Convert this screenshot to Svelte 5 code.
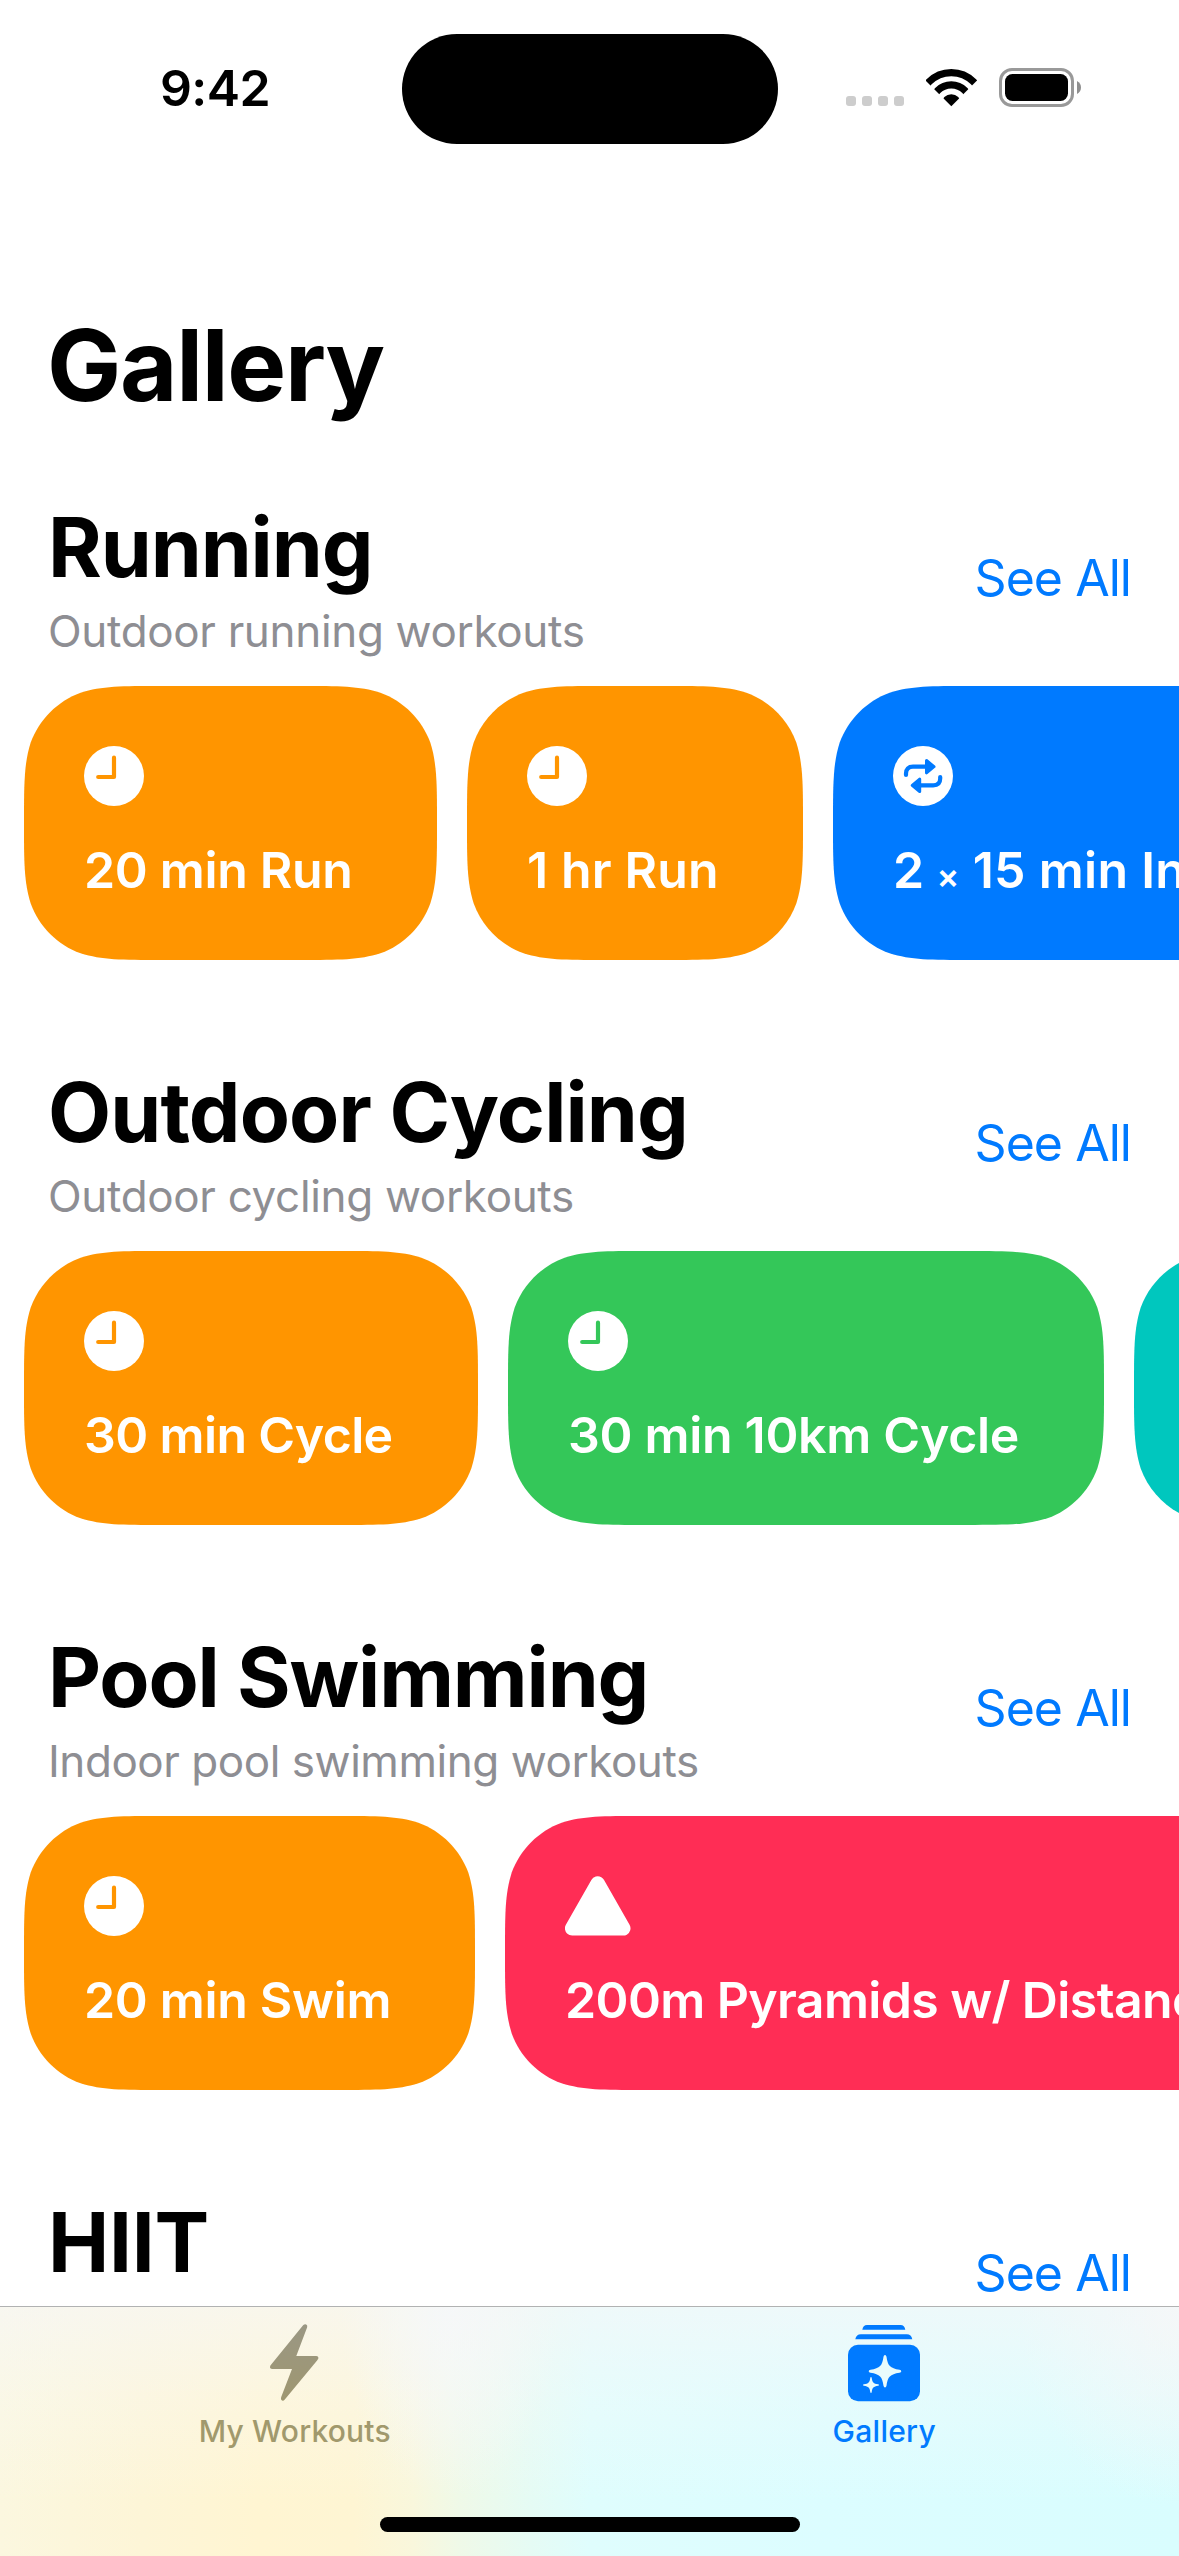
<script>
  const sections = [
    {
      title: 'Running',
      tracking: -1.1,
      subtitle: 'Outdoor running workouts',
      subTracking: -0.33,
      cards: [
        { label: '20 min Run', tracking: -0.33, icon: 'clock', color: 'orange', width: 413 },
        { label: '1 hr Run', tracking: 0.14, icon: 'clock', color: 'orange', width: 336 },
        { count: '2', label: '15 min Intervals', tracking: 0.3, icon: 'repeat', color: 'blue', width: 640 }
      ]
    },
    {
      title: 'Outdoor Cycling',
      tracking: -0.88,
      subtitle: 'Outdoor cycling workouts',
      subTracking: -0.33,
      cards: [
        { label: '30 min Cycle', tracking: -0.62, icon: 'clock', color: 'orange', width: 454 },
        { label: '30 min 10km Cycle', tracking: -0.3, icon: 'clock', color: 'green', width: 596 },
        { label: '', tracking: 0, icon: '', color: 'teal', width: 500 }
      ]
    },
    {
      title: 'Pool Swimming',
      tracking: -1.14,
      subtitle: 'Indoor pool swimming workouts',
      subTracking: -0.45,
      cards: [
        { label: '20 min Swim', tracking: -0.31, icon: 'clock', color: 'orange', width: 451 },
        { label: '200m Pyramids w/ Distance', tracking: -0.62, icon: 'pyramid', color: 'pink', width: 800 }
      ]
    },
    { title: 'HIIT', tracking: -0.3, subtitle: '', subTracking: 0, cards: [] }
  ];

  const CARD_HEIGHT = 274;

  // Continuous-curvature rounded rectangle for a card of the given width.
  function cardShape(w) {
    const h = CARD_HEIGHT;
    const r = h / 2 / 1.52866;
    const [a, b, c, d, e, f, g] = [1.52866, 1.08849, 0.86841, 0.63149, 0.37282, 0.16906, 0.07491].map((k) => k * r);
    return (
      `path("M${a} 0 H${w - a} C${w - b} 0 ${w - c} 0 ${w - d} ${g} C${w - e} ${f} ${w - f} ${e} ${w - g} ${d} ` +
      `C${w} ${c} ${w} ${b} ${w} ${a} V${h - a} C${w} ${h - b} ${w} ${h - c} ${w - g} ${h - d} ` +
      `C${w - f} ${h - e} ${w - e} ${h - f} ${w - d} ${h - g} C${w - c} ${h} ${w - b} ${h} ${w - a} ${h} ` +
      `H${a} C${b} ${h} ${c} ${h} ${d} ${h - g} C${e} ${h - f} ${f} ${h - e} ${g} ${h - d} ` +
      `C0 ${h - c} 0 ${h - b} 0 ${h - a} V${a} C0 ${b} 0 ${c} ${g} ${d} C${f} ${e} ${e} ${f} ${d} ${g} C${c} 0 ${b} 0 ${a} 0 Z")`
    );
  }
</script>

<div class="screen">
  <header class="status">
    <div class="time">9:42</div>
    <div class="island"></div>
    <div class="indicators">
      <svg class="dots" width="58" height="39" viewBox="0 0 58 39">
        <rect x="0" y="28" width="10" height="10" rx="3" />
        <rect x="16" y="28" width="10" height="10" rx="3" />
        <rect x="32" y="28" width="10" height="10" rx="3" />
        <rect x="48" y="28" width="10" height="10" rx="3" />
      </svg>
      <svg width="51" height="39" viewBox="0 0 51 39">
        <clipPath id="wedge"><path d="M25.3 38.3L-12 1V-2H62.6V1Z" /></clipPath>
        <g clip-path="url(#wedge)">
          <circle cx="25.3" cy="36" r="31.4" fill="none" stroke="#000" stroke-width="7.2" />
          <circle cx="25.3" cy="36" r="19.2" fill="none" stroke="#000" stroke-width="7.2" />
          <circle cx="25.3" cy="36" r="9.8" />
        </g>
      </svg>
      <svg width="82" height="39" viewBox="0 0 82 39">
        <rect x="1.5" y="1.5" width="72" height="36" rx="11.5" fill="none" stroke="#999" stroke-width="3" />
        <rect x="6" y="6" width="63" height="27" rx="7.5" />
        <path d="M78 13C80.700 14.500 82 16.500 82 19.500S80.700 24.500 78 26Z" fill="#8f8f8f" />
      </svg>
    </div>
  </header>

  <main>
    <h1>Gallery</h1>
    {#each sections as s}
      <section>
        <div class="head">
          <div>
            <h2 style:letter-spacing="{s.tracking}px">{s.title}</h2>
            <p class="sub" style:letter-spacing="{s.subTracking}px">{s.subtitle}</p>
          </div>
          <a class="all" href="#all">See All</a>
        </div>
        <div class="cards">
          {#each s.cards as c}
            <article class="card {c.color}" style:width="{c.width}px" style:clip-path={cardShape(c.width)}>
              <div class="icon">
                {#if c.icon === 'clock'}
                  <svg width="60" height="60" viewBox="0 0 60 60">
                    <circle cx="30" cy="30" r="30" fill="#fff" />
                    <path class="cut" d="M30 11.700V31H14.200" />
                  </svg>
                {:else if c.icon === 'repeat'}
                  <svg width="60" height="60" viewBox="0 0 60 60">
                    <circle cx="30" cy="30" r="30" fill="#fff" />
                    <path class="cut" d="M13 29V27.500Q13 20.700 20 20.700H33" />
                    <path class="cut" d="M47.200 31V32.500Q47.200 39.300 40.200 39.300H27" />
                    <path class="solid" d="M33.500 14.500L41 20.700L33.500 26.900Z" />
                    <path class="solid" d="M26.700 33.100L19.200 39.300L26.700 45.500Z" />
                  </svg>
                {:else if c.icon === 'pyramid'}
                  <svg width="66" height="60" viewBox="0 0 66 60">
                    <path d="M32.700 7.500L58.200 52.300H7.200Z" fill="#fff" stroke="#fff" stroke-width="14.600" stroke-linejoin="round" />
                  </svg>
                {/if}
              </div>
              <div class="label" style:letter-spacing="{c.tracking}px">
                {#if c.count}<span class="count">{c.count}</span><span class="times">×</span>{/if}{c.label}
              </div>
            </article>
          {/each}
        </div>
      </section>
    {/each}
  </main>

  <nav class="tabs">
    <div class="tab">
      <svg width="49" height="78" viewBox="0 0 49 78">
        <defs>
          <linearGradient id="bolt" x1="0" y1="0" x2="0" y2="1">
            <stop offset="0" stop-color="#9a9784" />
            <stop offset="1" stop-color="#9f9770" />
          </linearGradient>
        </defs>
        <path fill="url(#bolt)" d="M33.300 1Q35.500 -.8 37 1.200Q37.600 2.400 36.600 4.800L26.300 32H46.300Q48.900 32.200 48.300 34.500Q48 35.400 47.300 36.200L14.800 75.500Q13 77.600 11.400 76Q10.600 74.800 11.300 72.800L22 45H2Q-.5 44.700 .1 42.500Q.3 41.500 1 40.700Z" />
      </svg>
      <span class="tab-label workouts">My Workouts</span>
    </div>
    <div class="tab active">
      <svg width="73" height="78" viewBox="0 0 73 78">
        <g transform="translate(0 1)">
          <path d="M14.300 4.700Q15 0 19 0H52.600Q56.600 0 57.300 4.700Z" />
          <path d="M7.300 14.200Q8.300 9.300 12.800 9.300H58.800Q63.300 9.300 64.300 14.200Z" />
          <rect x="0" y="19.700" width="72" height="56.600" rx="10" />
          <path class="spark" transform="translate(37 46.300)" d="M0 -16.300Q1.200 -16.300 1.500 -14.500C2.700 -5.500 5 -3 14.500 -1.500Q16.300 -1.200 16.300 0T14.500 1.500C5 3 2.700 5.500 1.500 14.500Q1.200 16.300 0 16.300T-1.500 14.500C-2.700 5.500 -5 3 -14.500 1.500Q-16.300 1.200 -16.300 0T-14.500 -1.500C-5 -3 -2.700 -5.500 -1.500 -14.500Q-1.200 -16.300 0 -16.300Z" />
          <path class="spark" transform="translate(23 60) scale(.49)" d="M0 -16.300Q1.200 -16.300 1.500 -14.500C2.700 -5.500 5 -3 14.500 -1.500Q16.300 -1.200 16.300 0T14.500 1.500C5 3 2.700 5.500 1.500 14.500Q1.200 16.300 0 16.300T-1.500 14.500C-2.700 5.500 -5 3 -14.500 1.500Q-16.300 1.200 -16.300 0T-14.500 -1.500C-5 -3 -2.700 -5.500 -1.500 -14.500Q-1.200 -16.300 0 -16.300Z" />
        </g>
      </svg>
      <span class="tab-label">Gallery</span>
    </div>
    <div class="home"></div>
  </nav>
</div>

<style>
  :global(body) { background: #fff; }
  .screen {
    width: 1179px;
    height: 2556px;
    display: flex;
    flex-direction: column;
    overflow: hidden;
    background: #fff;
    color: #000;
    font-family: Inter, 'Liberation Sans', sans-serif;
  }
  svg { display: block; flex: none; }

  .status {
    flex: none;
    height: 177px;
    display: grid;
    grid-template-columns: 401.5px 376px 1fr;
    align-items: center;
  }
  .time {
    padding: 0 0 1px 160px;
    font-size: 50px;
    line-height: 60px;
    font-weight: 600;
    letter-spacing: -0.61px;
  }
  .island { height: 110.5px; margin-top: 0.5px; border-radius: 56px; background: #000; }
  .indicators { display: flex; gap: 22px; padding-left: 68.5px; padding-bottom: 2px; }
  .dots { fill: #cdcdcd; }

  main { flex: 1; min-height: 0; overflow: hidden; padding-top: 128px; box-sizing: border-box; }
  h1, h2, p { margin: 0; }
  h1 {
    margin: 0 48px 72px 47px;
    font-size: 99px;
    line-height: 120px;
    font-weight: 700;
    letter-spacing: -1.3px;
  }
  section { margin-bottom: 102px; }
  .head {
    height: 161px;
    padding: 0 48px;
    display: flex;
    justify-content: space-between;
    align-items: center;
  }
  h2 { font-size: 82px; line-height: 102px; font-weight: 700; white-space: nowrap; }
  .sub { margin-top: 5px; height: 54px; font-size: 44px; line-height: 54px; color: #8e8e93; white-space: nowrap; }
  .all {
    margin-top: 1px;
    font-size: 50px;
    line-height: 60px;
    letter-spacing: -0.96px;
    color: #007aff;
    text-decoration: none;
  }

  .cards { display: flex; gap: 30px; padding-left: 24px; margin-top: 28px; }
  .card {
    flex: none;
    box-sizing: border-box;
    height: 274px;
    padding: 60px 0 0 60px;
    display: flex;
    flex-direction: column;
    gap: 34px;
    background: var(--tint);
  }
  .orange { --tint: #ff9500; }
  .blue { --tint: #007aff; }
  .green { --tint: #34c759; }
  .teal { --tint: #00c7be; }
  .pink { --tint: #ff2d55; }
  .icon { height: 60px; }
  .cut { fill: none; stroke: var(--tint); stroke-width: 4.2; stroke-linecap: round; stroke-linejoin: round; }
  .solid { fill: var(--tint); stroke: var(--tint); stroke-width: 3; stroke-linejoin: round; }
  .label { font-size: 50px; line-height: 60px; font-weight: 600; color: #fff; white-space: nowrap; }
  .count { margin-right: 12px; }
  .times { font-size: 34px; line-height: 1; margin-right: 13px; }

  .tabs {
    flex: none;
    height: 250px;
    box-sizing: border-box;
    border-top: 1px solid #b1b2b2;
    display: grid;
    grid-template-columns: 1fr 1fr;
    grid-template-rows: 210px 15px;
    justify-items: center;
    background:
      linear-gradient(180deg, rgba(246, 247, 248, 0.68) 0%, rgba(247, 249, 249, 0.3) 38%, rgba(247, 249, 249, 0) 78%),
      radial-gradient(110px 190px at 450px 0, rgba(246, 248, 251, 0.9), rgba(246, 248, 251, 0)),
      radial-gradient(160px 200px at 1179px 0, rgba(248, 246, 247, 0.8), rgba(248, 246, 247, 0)),
      linear-gradient(90deg, #fbf7df 0%, #fdf5d7 12%, #fff5d2 22%, #fef5d3 30%, #f9f7dc 35%, #eff9e8 39%, #e5fbf4 45%, #dffdfd 50%, #dcfdff 70%, #d9fdfe 100%);
  }
  .tab {
    padding-top: 17px;
    display: flex;
    flex-direction: column;
    align-items: center;
    gap: 11px;
    color: #a1996c;
  }
  .tab.active { color: #007aff; fill: #007aff; }
  .spark { fill: #e9fbfc; }
  .tab-label { font-size: 30px; line-height: 36px; font-weight: 500; letter-spacing: 0.25px; }
  .workouts { letter-spacing: 0.2px; }
  .home { grid-column: 1 / -1; width: 420px; height: 15px; border-radius: 8px; background: #000; }
</style>
